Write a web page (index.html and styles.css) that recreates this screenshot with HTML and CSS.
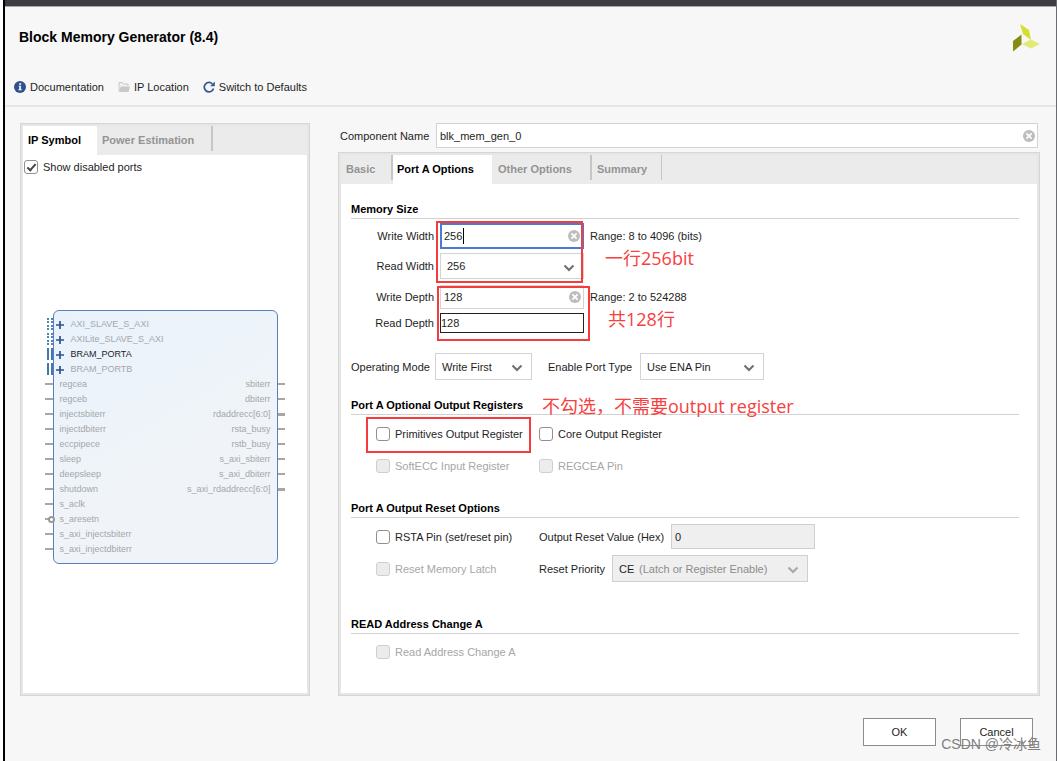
FILE: index.html
```html
<!DOCTYPE html>
<html lang="en">
<head>
<meta charset="utf-8">
<title>Block Memory Generator (8.4)</title>
<link rel="stylesheet" href="styles.css">
</head>
<body>
<svg class="defs" width="0" height="0" aria-hidden="true">
  <symbol id="clear" viewBox="0 0 12 12"><circle cx="6" cy="6" r="6" fill="#bdbdbd"/><path d="M3.4 3.4l5.2 5.2M8.6 3.4L3.4 8.6" stroke="#fff" stroke-width="1.7"/></symbol>
  <symbol id="chevron" viewBox="0 0 12 8"><path d="M1.5 1.5L6 6l4.500-4.500" fill="none" stroke="currentColor" stroke-width="2.100"/></symbol>
  <symbol id="plus" viewBox="0 0 8 8"><path d="M4 0v8M0 4h8" stroke="#2f5290" stroke-width="1.700"/></symbol>
</svg>
<div class="window">
  <div class="topbar"></div>
  <header class="header">
    <h1 class="title">Block Memory Generator (8.4)</h1>
    <svg class="logo" width="28" height="28" viewBox="0 0 28 28" aria-label="Xilinx">
      <path d="M8 0l9 6 2 10-8-6z" fill="#d3e02f"/>
      <path d="M9.500 10.500v10L1 27.500V17z" fill="#858a12"/>
      <path d="M10 20l9-4.500 9 4.500-9 4.500z" fill="#e2ea76"/>
    </svg>
  </header>
  <nav class="toolbar">
    <button class="tool" type="button">
      <svg width="12" height="12" viewBox="0 0 12 12"><circle cx="6" cy="6" r="6" fill="#30518d"/><path d="M5.200 2.200h2v1.600h-2zM4.800 4.800h2.100v3.500h.8v1H4.400v-1h.9V5.700h-.5z" fill="#fff"/></svg>
      Documentation</button>
    <button class="tool" type="button">
      <svg width="12" height="12" viewBox="0 0 12 12"><path d="M1 10V1.500h3.500l1 1.500H10v2" fill="#f0f0f0" stroke="#c9c9c9"/><path d="M2.800 5.500H12L10.500 11H.8z" fill="#c9c9c9"/></svg>
      IP Location</button>
    <button class="tool" type="button">
      <svg width="12" height="12" viewBox="0 0 12 12"><path d="M9.300 2.800A4.700 4.700 0 1 0 10.500 7.500" fill="none" stroke="#385a94" stroke-width="1.800"/><path d="M11.800.5v4.700H7.100z" fill="#385a94"/></svg>
      Switch to Defaults</button>
  </nav>

  <main class="main">
    <section class="panel side">
      <div class="tabs" role="tablist">
        <button class="tab active tab-ip" role="tab" type="button">IP Symbol</button>
        <button class="tab ruled tab-power" role="tab" type="button">Power Estimation</button>
      </div>
      <label class="check show-ports"><input type="checkbox" checked>Show disabled ports</label>
      <div class="symbol-area">
        <div class="symbol">
          <ul class="ports">
            <li class="bus dotted"><svg width="8" height="8"><use href="#plus"/></svg>AXI_SLAVE_S_AXI</li>
            <li class="bus dotted"><svg width="8" height="8"><use href="#plus"/></svg>AXILite_SLAVE_S_AXI</li>
            <li class="bus on"><svg width="8" height="8"><use href="#plus"/></svg>BRAM_PORTA</li>
            <li class="bus"><svg width="8" height="8"><use href="#plus"/></svg>BRAM_PORTB</li>
            <li class="pin">regcea</li>
            <li class="pin">regceb</li>
            <li class="pin">injectsbiterr</li>
            <li class="pin">injectdbiterr</li>
            <li class="pin">eccpipece</li>
            <li class="pin">sleep</li>
            <li class="pin">deepsleep</li>
            <li class="pin">shutdown</li>
            <li class="pin">s_aclk</li>
            <li class="pin inverted">s_aresetn</li>
            <li class="pin">s_axi_injectsbiterr</li>
            <li class="pin">s_axi_injectdbiterr</li>
          </ul>
          <ul class="ports out">
            <li class="pin">sbiterr</li>
            <li class="pin">dbiterr</li>
            <li class="pin wide">rdaddrecc[6:0]</li>
            <li class="pin">rsta_busy</li>
            <li class="pin">rstb_busy</li>
            <li class="pin">s_axi_sbiterr</li>
            <li class="pin">s_axi_dbiterr</li>
            <li class="pin wide">s_axi_rdaddrecc[6:0]</li>
          </ul>
        </div>
      </div>
    </section>

    <section class="config">
      <div class="name-row">
        <label for="name">Component Name</label>
        <div class="field name-field"><input id="name" type="text" value="blk_mem_gen_0"><button class="clear" type="button" aria-label="Clear"><svg width="12" height="12"><use href="#clear"/></svg></button></div>
      </div>
      <div class="panel options">
        <div class="tabs" role="tablist">
          <button class="tab ruled tab-basic" role="tab" type="button">Basic</button>
          <button class="tab active tab-a" role="tab" type="button">Port A Options</button>
          <button class="tab ruled tab-other" role="tab" type="button">Other Options</button>
          <button class="tab ruled tab-summary" role="tab" type="button">Summary</button>
        </div>
        <form class="form">
          <h2 class="heading">Memory Size</h2>
          <div class="group widths">
            <label for="ww">Write Width</label>
            <div class="field focused"><input id="ww" type="text" value="256"><span class="caret"></span><button class="clear" type="button" aria-label="Clear"><svg width="12" height="12"><use href="#clear"/></svg></button></div>
            <span class="range">Range: 8 to 4096 (bits)</span>
            <label for="rw">Read Width</label>
            <div class="select"><select id="rw"><option>256</option></select><svg class="chev" width="12" height="8"><use href="#chevron"/></svg></div>
            <span class="mark mark-widths"></span>
            <span class="note note-widths">一行256bit</span>
          </div>
          <div class="group depths">
            <label for="wd">Write Depth</label>
            <div class="field"><input id="wd" type="text" value="128"><button class="clear" type="button" aria-label="Clear"><svg width="12" height="12"><use href="#clear"/></svg></button></div>
            <span class="range">Range: 2 to 524288</span>
            <label for="rd">Read Depth</label>
            <div class="field plain"><input id="rd" type="text" value="128" readonly></div>
            <span class="mark mark-depths"></span>
            <span class="note note-depths">共128行</span>
          </div>
          <div class="modes">
            <label class="mode-label" for="om">Operating Mode</label>
            <div class="select sel-mode"><select id="om"><option>Write First</option></select><svg class="chev" width="12" height="8"><use href="#chevron"/></svg></div>
            <label class="enable-label" for="ep">Enable Port Type</label>
            <div class="select sel-enable"><select id="ep"><option>Use ENA Pin</option></select><svg class="chev" width="12" height="8"><use href="#chevron"/></svg></div>
          </div>

          <h2 class="heading">Port A Optional Output Registers<span class="note note-regs">不勾选，不需要output register</span></h2>
          <div class="pairs regs">
            <label class="check marked"><input type="checkbox">Primitives Output Register<span class="mark mark-prim"></span></label>
            <label class="check"><input type="checkbox">Core Output Register</label>
            <label class="check off"><input type="checkbox" disabled>SoftECC Input Register</label>
            <label class="check off"><input type="checkbox" disabled>REGCEA Pin</label>
          </div>

          <h2 class="heading">Port A Output Reset Options</h2>
          <div class="pairs resets">
            <label class="check"><input type="checkbox">RSTA Pin (set/reset pin)</label>
            <div class="inline"><label class="hex-label" for="hex">Output Reset Value (Hex)</label><div class="field disabled"><input id="hex" type="text" value="0" disabled></div></div>
            <label class="check off"><input type="checkbox" disabled>Reset Memory Latch</label>
            <div class="inline"><label class="prio-label" for="prio">Reset Priority</label><div class="select disabled sel-prio"><select id="prio" disabled><option>CE</option></select><span class="hint">(Latch or Register Enable)</span><svg class="chev" width="12" height="8"><use href="#chevron"/></svg></div></div>
          </div>

          <h2 class="heading">READ Address Change A</h2>
          <div class="pairs reads">
            <label class="check off"><input type="checkbox" disabled>Read Address Change A</label>
          </div>
        </form>
      </div>
    </section>
  </main>

  <footer class="footer">
    <button class="btn" type="button">OK</button>
    <button class="btn" type="button">Cancel</button>
    <span class="watermark">CSDN @冷冰鱼</span>
  </footer>
</div>
</body>
</html>
```
FILE: styles.css
```css
*, *::before, *::after { box-sizing: border-box; }
body {
  margin: 0;
  background: #fff;
  color: #1e1e1e;
  font: 11px/16px "Liberation Sans", Arial, sans-serif;
}
button, input, select { font: inherit; color: inherit; margin: 0; padding: 0; border: 0; background: none; }
svg { display: block; flex: none; }
.defs { position: absolute; }

.window {
  display: flex;
  flex-direction: column;
  min-height: 100vh;
  margin-left: 3px;
  border-left: 2px solid #000;
  border-right: 1px solid #6a6c72;
  background: #f7f7f7;
}
.topbar { height: 7px; background: #3b3d43; border-bottom: 1px solid #a9aaae; }
.header { display: flex; justify-content: space-between; align-items: flex-start; height: 67px; padding: 16px 16px 0 14px; }
.title { margin: 4px 0 0; font-size: 14px; line-height: 20px; color: #000; }
.logo { margin-top: 1px; }
.toolbar { display: flex; gap: 14px; height: 33px; padding: 6px 9px 11px; border-bottom: 2px solid #e6e6e6; }
.tool { display: flex; align-items: center; gap: 4px; white-space: nowrap; }

.main { display: flex; flex: 1; gap: 28px; padding: 16px 16px 0 15px; }
.panel { display: flex; flex-direction: column; border: 3px solid #e6e6e6; outline: 1px solid #d6d6d6; outline-offset: -1px; background: #fff; }
.side { flex: 0 0 290px; }
.config { display: flex; flex-direction: column; flex: 1; min-width: 0; }
.options { flex: 1; }

.tabs { display: flex; height: 29px; background: #ebebeb; }
.tab { position: relative; padding: 0 5px 2px; text-align: left; font-weight: bold; color: #949494; white-space: nowrap; }
.tab.active { background: #fff; color: #000; }
.ruled::after { content: ""; position: absolute; right: 0; top: 0; width: 2px; height: 25px; background: #c6c6c6; }
.tab-ip { width: 74px; }
.tab-power { width: 116px; }
.tab-basic { width: 52px; }
.tab-a { width: 99px; padding: 0 4px 2px; }
.tab-other { width: 100px; padding-left: 6px; }
.tab-summary { width: 70px; }
.tab-summary::after { width: 1px; }

.check { display: flex; align-items: center; gap: 5px; white-space: nowrap; }
.check input { appearance: none; position: relative; flex: none; width: 14px; height: 14px; border: 1px solid #909090; border-radius: 3px; background: #fff; }
.check input:checked::after { content: ""; position: absolute; left: 4px; top: 1px; width: 5px; height: 9px; border: solid #444; border-width: 0 2px 2px 0; transform: rotate(42deg); }
.check.off { color: #a6a6a6; }
.check.off input { border-color: #cfcfcf; background: #ececee; }
.show-ports { height: 26px; padding: 0 0 2px 1px; }

.symbol-area { display: flex; flex: 1; align-items: center; justify-content: center; }
.symbol {
  display: flex;
  justify-content: space-between;
  width: 225px;
  padding: 6px;
  border: 1px solid #5b7fba;
  border-radius: 6px;
  background: linear-gradient(150deg, #e9f2fc, #f0f4f8 60%);
  font-size: 9px;
  line-height: 15px;
  color: #a5a7aa;
}
.ports { margin: 0; padding: 0; list-style: none; }
.out { padding-top: 60px; text-align: right; }
.ports li { position: relative; height: 15px; white-space: nowrap; }
.bus { display: flex; align-items: center; gap: 7px; left: -4px; }
.bus.on { color: #1e1e1e; }
.bus::before { content: ""; position: absolute; left: -9px; top: 1px; width: 6px; height: 12px; border: solid #4478ab; border-width: 0 2px; }
.bus.dotted::before { border-style: dotted; border-color: #4d86bd; }
.pin::before { content: ""; position: absolute; left: -15px; top: 6px; width: 8px; height: 2px; background: #a6a6a6; }
.out .pin::before { left: auto; right: -14px; width: 7px; }
.out .wide::before { height: 3px; }
.pin.inverted::after { content: ""; position: absolute; left: -12px; top: 4px; width: 7px; height: 7px; border: 2px solid #999; border-radius: 50%; background: #fff; }

.name-row { display: flex; align-items: center; height: 25px; margin: 0 2px 4px 2px; }
.name-row label { flex: 0 0 96px; }
.name-field { flex: 1; height: 25px; }
.field { position: relative; display: flex; align-items: center; border: 1px solid #d3d3d3; background: #fff; }
.field input { flex: 1; min-width: 0; height: 100%; padding-left: 3px; outline: 0; }
.clear { flex: none; margin-right: 2px; }
.focused { border: 2px solid #4a7bd0; }
.focused input { padding-left: 2px; }
.plain { border-color: #222; height: 20px; }
.plain input { padding-left: 0; }
.caret { position: absolute; left: 21px; top: 3px; width: 1px; height: 16px; background: #000; }
.select { position: relative; height: 27px; border: 1px solid #d3d3d3; background: #fff; }
.select select { appearance: none; width: 100%; height: 100%; padding-left: 6px; opacity: 1; outline: 0; }
.chev { position: absolute; right: 8px; top: 10px; color: #707070; pointer-events: none; }
.disabled { background: #efefef; border-color: #cfcfcf; }
.disabled .chev { color: #a8a8a8; }
.hint { position: absolute; left: 26px; top: 5px; color: #8c8c8c; pointer-events: none; white-space: nowrap; }

.form { padding: 17px 18px 0 10px; }
.heading { position: relative; margin: 0; padding-bottom: 1px; border-bottom: 1px solid #d2d2d2; font-size: 11px; line-height: 16px; color: #000; }
.group { position: relative; display: grid; grid-template-columns: 83px 144px auto; column-gap: 6px; row-gap: 4px; align-items: center; justify-content: start; }
.group label { text-align: right; }
.group .field:not(.plain), .group .select { height: 26px; }
.widths { grid-template-rows: 26px 26px; margin-top: 4px; }
.depths { grid-template-rows: 24px 20px; margin-top: 6px; }
.depths .field:not(.plain) { height: 24px; }

.modes { display: flex; align-items: center; margin: 20px 0 17px; }
.mode-label { width: 84px; }
.sel-mode { width: 97px; }
.enable-label { width: 92px; margin-left: 16px; }
.sel-enable { width: 124px; }

.pairs { display: grid; grid-template-columns: 163px auto; justify-content: start; align-items: center; padding-left: 25px; }
.regs { grid-template-rows: 20px 20px; row-gap: 12px; margin: 9px 0 24px; }
.resets { grid-template-rows: 25px 27px; row-gap: 6px; margin: 6px 0 34px; }
.reads { margin-top: 10px; }
.marked { position: relative; }
.inline { display: flex; align-items: center; }
.inline .field { width: 144px; height: 25px; }
.hex-label { width: 132px; }
.prio-label { width: 73px; }
.sel-prio { width: 196px; }

.mark { position: absolute; border: 2px solid #f53b3b; pointer-events: none; }
.mark-widths { left: 85px; top: -2px; width: 147px; height: 62px; }
.mark-depths { left: 86px; top: 1px; width: 153px; height: 55px; }
.mark-prim { left: -10px; top: -9px; width: 165px; height: 36px; }
.note { position: absolute; color: #f84040; font: 18px/24px "Open Sans", "Noto Sans CJK SC", sans-serif; white-space: nowrap; pointer-events: none; }
.note-widths { left: 254px; top: 23px; }
.note-depths { left: 257px; top: 22px; }
.note-regs { left: 191px; top: -3px; }

.footer { position: relative; display: flex; justify-content: flex-end; gap: 24px; height: 65px; padding: 22px 23px 0 0; }
.btn { width: 73px; height: 28px; border: 1px solid #8d8d8d; background: #fff; }
.watermark { position: absolute; right: 15px; bottom: 7px; color: #808080; font: 14px/20px "Liberation Sans", "Noto Sans CJK SC", sans-serif; white-space: nowrap; }
```
